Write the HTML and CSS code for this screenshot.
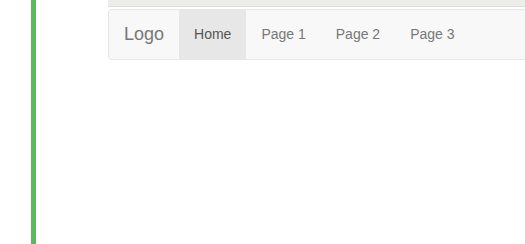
FILE: index.html
```html
<!DOCTYPE html>
<html>
<head>
<meta charset="utf-8">
<link rel="stylesheet" href="styles.css">
</head>
<body>
<div class="page">
  <div class="rail"></div>
  <div class="main">
    <div class="topbar"></div>
    <nav class="navbar">
      <a class="brand" href="#">Logo</a>
      <ul class="nav">
        <li class="active"><a href="#">Home</a></li>
        <li><a href="#">Page 1</a></li>
        <li><a href="#">Page 2</a></li>
        <li><a href="#">Page 3</a></li>
      </ul>
    </nav>
  </div>
</div>
</body>
</html>
```
FILE: styles.css
```css
html, body {
  margin: 0;
  padding: 0;
  background: #fff;
  height: 100%;
  overflow: hidden;
}
body {
  font-family: "Liberation Sans", Arial, sans-serif;
  font-size: 14px;
  line-height: 20px;
  color: #333;
}
.page {
  display: flex;
  height: 244px;
  padding-left: 31px;
}
.rail {
  width: 5px;
  flex: none;
  background: #5cb85c;
}
.main {
  margin-left: 72px;
  flex: 1;
  min-width: 0;
}
.topbar {
  height: 6px;
  background: #ececea;
  border-bottom: 1px solid #dcdcd8;
  margin-bottom: 2px;
}
.navbar {
  display: flex;
  align-items: stretch;
  height: 49px;
  background: #f8f8f8;
  border: 1px solid #e7e7e7;
  border-right: 0;
  border-radius: 4px 0 0 4px;
}
.brand {
  display: block;
  padding: 14px 15px 15px;
  font-size: 18px;
  line-height: 20px;
  color: #777;
  text-decoration: none;
}
.nav {
  display: flex;
  list-style: none;
  margin: 0;
  padding: 0;
}
.nav li a {
  display: block;
  padding: 14px 15px 15px;
  line-height: 20px;
  color: #777;
  text-decoration: none;
}
.nav li.active a {
  background: #e7e7e7;
  color: #555;
}
```
